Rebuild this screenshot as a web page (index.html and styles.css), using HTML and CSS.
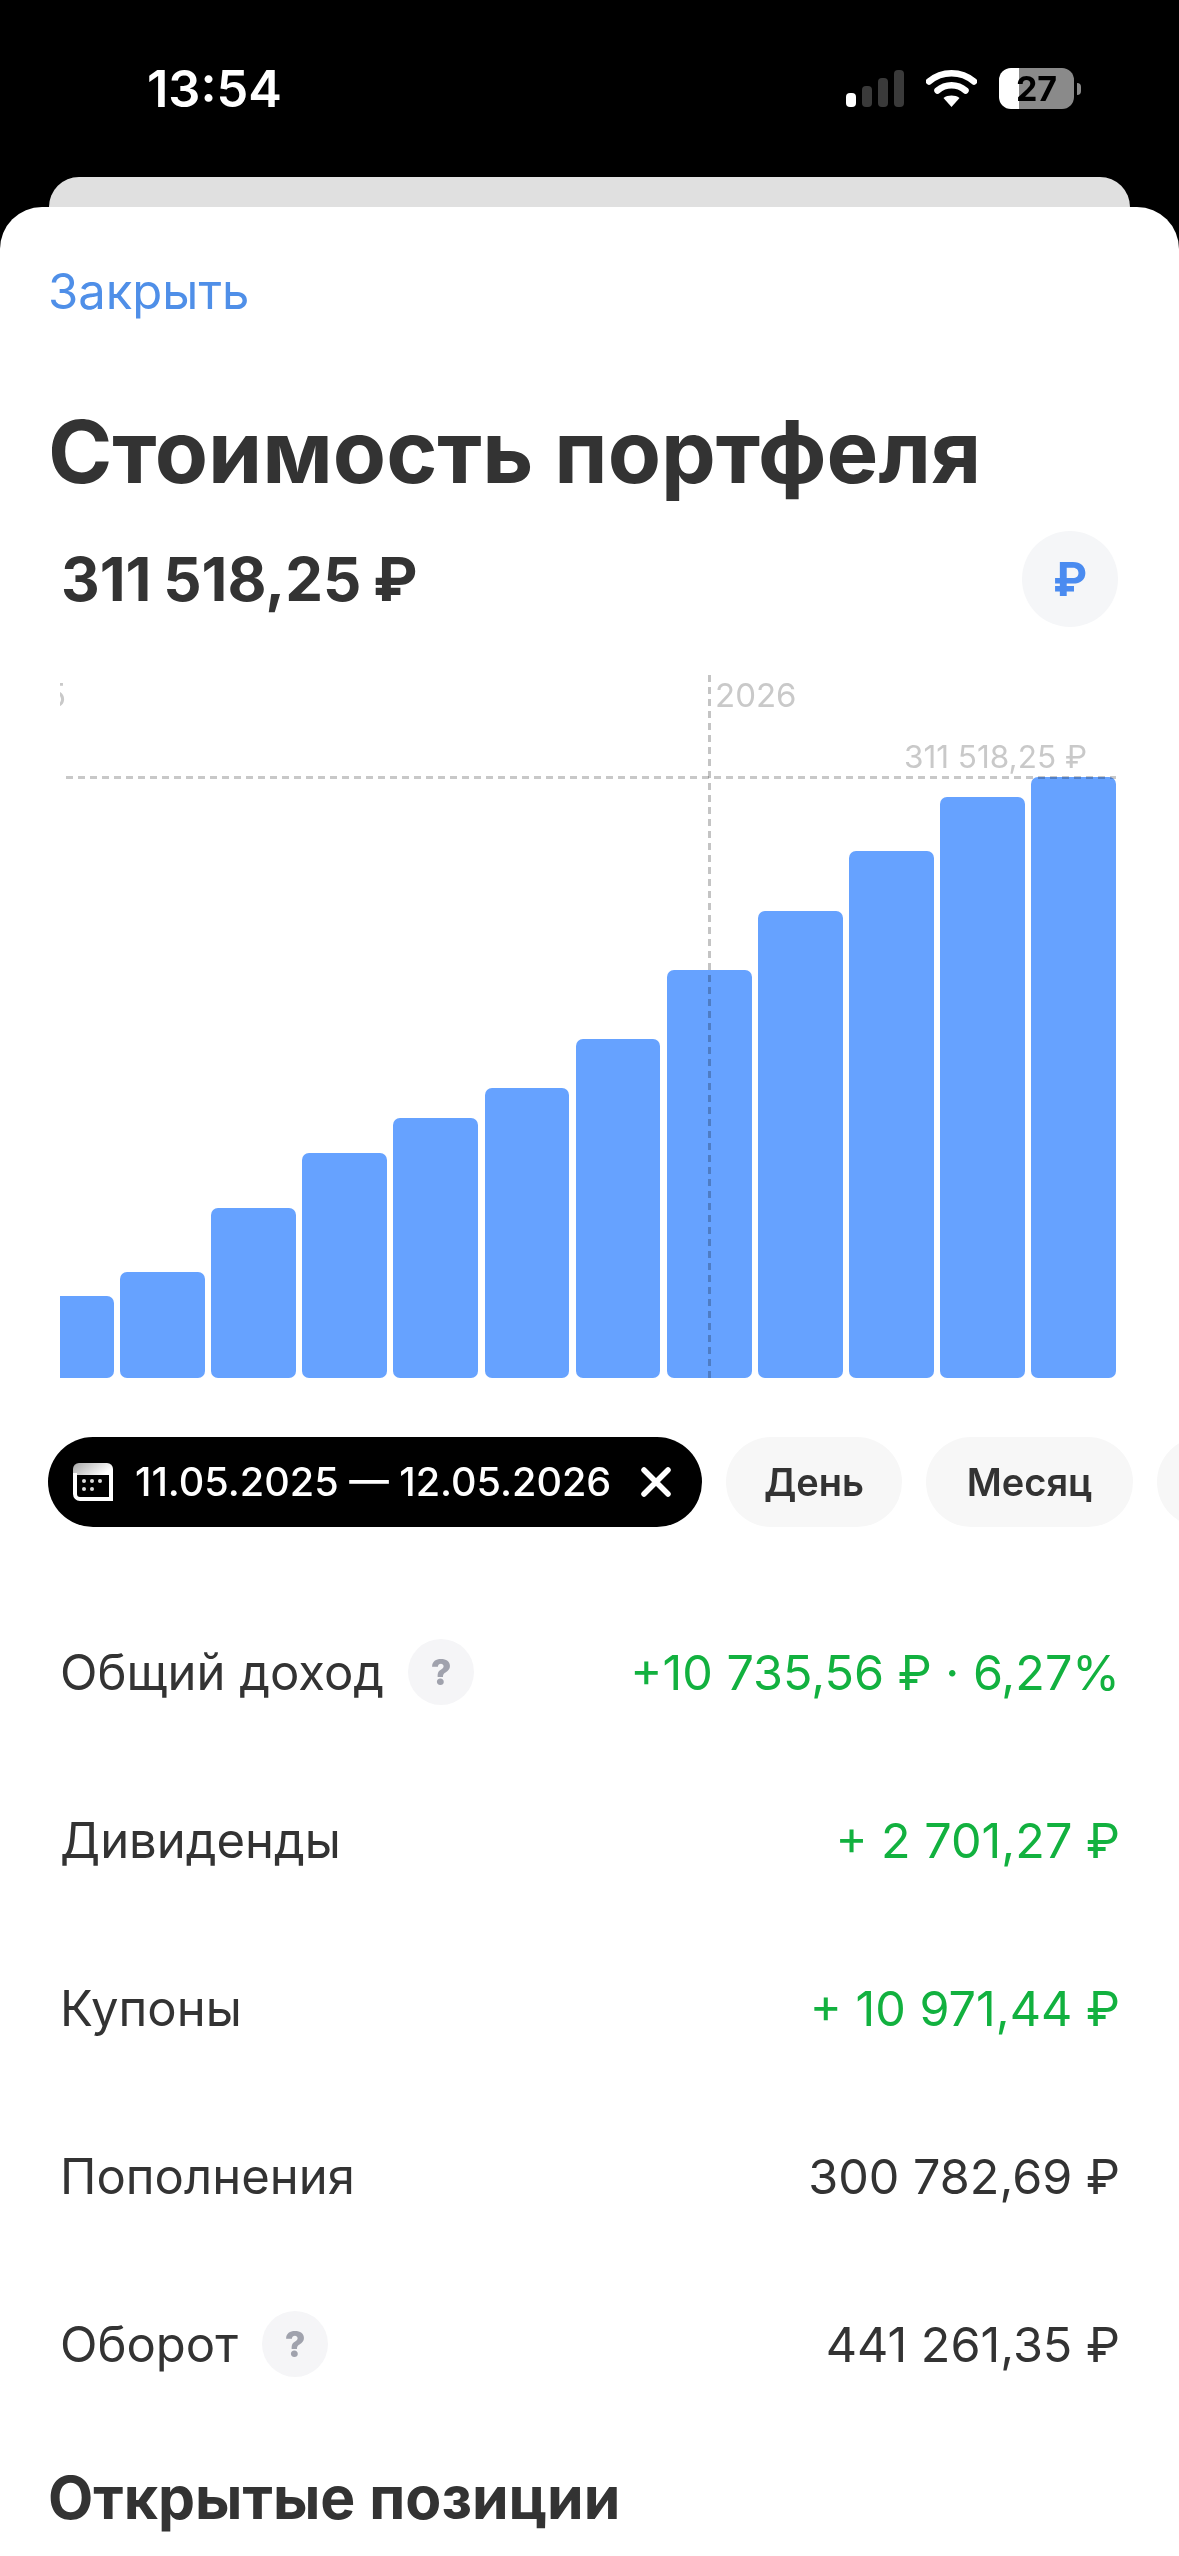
FILE: index.html
```html
<!DOCTYPE html>
<html lang="ru">
<head>
    <meta charset="UTF-8">
    <meta name="viewport" content="width=device-width, initial-scale=1.0">
    <title>Стоимость портфеля</title>
    <link rel="stylesheet" href="styles.css">
</head>
<body>

    <div class="status-bar">
        <span class="time">13:54</span>
        <div class="status-icons">
            <div class="signal">
                <span class="signal-bar signal-on s1"></span>
                <span class="signal-bar s2"></span>
                <span class="signal-bar s3"></span>
                <span class="signal-bar s4"></span>
            </div>
            <svg class="wifi" width="51" height="37" viewBox="0 0 51 37">
                <path d="M3 11.5C16 .5 35 .5 48 11.5" fill="none" stroke="#fff" stroke-width="6.5" stroke-linecap="round"/>
                <path d="M11.5 20.5C19.5 13.5 31.5 13.5 39.500 20.500" fill="none" stroke="#fff" stroke-width="6.5" stroke-linecap="round"/>
                <path d="M17.500 28C22 24.800 29 24.800 33.500 28L25.500 37Z" fill="#fff"/>
            </svg>
            <div class="battery">
                <div class="battery-body"><span class="battery-level">27</span></div>
                <span class="battery-nub"></span>
            </div>
        </div>
    </div>

    <div class="back-card"></div>

    <div class="sheet">
        <a class="close-link">Закрыть</a>
        <h1 class="title">Стоимость портфеля</h1>

        <div class="amount-row">
            <span class="amount">311 518,25 ₽</span>
            <span class="currency-btn">₽</span>
        </div>

        <div class="chart">
            <div class="bars">
                <div class="bar" style="height: 82px"></div>
                <div class="bar" style="height: 106px"></div>
                <div class="bar" style="height: 170px"></div>
                <div class="bar" style="height: 225px"></div>
                <div class="bar" style="height: 260px"></div>
                <div class="bar" style="height: 290px"></div>
                <div class="bar" style="height: 339px"></div>
                <div class="bar" style="height: 408px"></div>
                <div class="bar" style="height: 467px"></div>
                <div class="bar" style="height: 527px"></div>
                <div class="bar" style="height: 581px"></div>
                <div class="bar" style="height: 601px"></div>
            </div>
            <span class="year-label year-old">2025</span>
            <span class="year-label year-new">2026</span>
            <span class="max-label">311 518,25 ₽</span>
            <div class="line-h"></div>
            <div class="line-v"></div>
        </div>

        <div class="chips">
            <div class="chip chip-active">
                <svg class="calendar" width="40" height="38" viewBox="0 0 40 38">
                    <defs>
                        <linearGradient id="calTop" x1="0" y1="0" x2="1" y2="0.4">
                            <stop offset="0" stop-color="#a8a8a8"/>
                            <stop offset="1" stop-color="#fff"/>
                        </linearGradient>
                    </defs>
                    <path d="M6 0H34A6 6 0 0 1 40 6V12H0V6A6 6 0 0 1 6 0Z" fill="url(#calTop)"/>
                    <path d="M2 10V31A5 5 0 0 0 7 36H38V10" fill="none" stroke="#fff" stroke-width="4"/>
                    <circle cx="11" cy="18" r="2" fill="#ddd"/>
                    <circle cx="19" cy="18" r="2" fill="#ddd"/>
                    <circle cx="27" cy="18" r="2" fill="#ddd"/>
                    <circle cx="11" cy="26" r="2" fill="#ddd"/>
                    <circle cx="19" cy="26" r="2" fill="#ddd"/>
                </svg>
                <span class="chip-dates">11.05.2025 — 12.05.2026</span>
                <svg class="chip-close" width="30" height="30" viewBox="0 0 30 30">
                    <path d="M3 3L27 27M27 3L3 27" stroke="#fff" stroke-width="5.500" stroke-linecap="round"/>
                </svg>
            </div>
            <div class="chip chip-day">День</div>
            <div class="chip chip-month">Месяц</div>
            <div class="chip chip-year">Год</div>
        </div>

        <div class="rows">
            <div class="row">
                <div class="row-label">Общий доход <span class="hint">?</span></div>
                <div class="row-value green">+10 735,56 ₽ · 6,27%</div>
            </div>
            <div class="row">
                <div class="row-label">Дивиденды</div>
                <div class="row-value green">+ 2 701,27 ₽</div>
            </div>
            <div class="row">
                <div class="row-label">Купоны</div>
                <div class="row-value green">+ 10 971,44 ₽</div>
            </div>
            <div class="row">
                <div class="row-label">Пополнения</div>
                <div class="row-value">300 782,69 ₽</div>
            </div>
            <div class="row">
                <div class="row-label">Оборот <span class="hint">?</span></div>
                <div class="row-value">441 261,35 ₽</div>
            </div>
        </div>

        <h2 class="section-title">Открытые позиции</h2>
    </div>

</body>
</html>
```

FILE: styles.css
```css
html, body {
    margin: 0;
    height: 2556px;
    overflow: hidden;
}

body {
    background-color: #000;
    font-family: Inter, 'Liberation Sans', sans-serif;
    color: #333;
}

.status-bar {
    display: flex;
    justify-content: space-between;
    align-items: center;
    height: 177px;
    padding: 0 98px 0 147px;
    box-sizing: border-box;
}

.time {
    color: #fff;
    font-size: 50.5px;
    font-weight: 600;
}

.status-icons {
    display: flex;
    align-items: center;
    gap: 22px;
}

.signal {
    display: flex;
    align-items: flex-end;
    gap: 6px;
    height: 37px;
}

.signal-bar {
    width: 10px;
    border-radius: 4px;
    background-color: #3a3a3a;
}

.signal-on { background-color: #fff; }
.s1 { height: 14px; }
.s2 { height: 21px; }
.s3 { height: 29px; }
.s4 { height: 37px; }

.battery {
    display: flex;
    align-items: center;
    gap: 3px;
}

.battery-body {
    width: 75px;
    height: 41px;
    border-radius: 12px;
    background: linear-gradient(to right, #fff 27%, #8a8a8a 27%);
    display: flex;
    align-items: center;
    justify-content: center;
}

.battery-level {
    color: #000;
    font-size: 34px;
    font-weight: 700;
}

.battery-nub {
    width: 4px;
    height: 12px;
    border-radius: 0 6px 6px 0;
    background-color: #8a8a8a;
}

.back-card {
    height: 30px;
    margin: 0 49px;
    background-color: #e0e0e0;
    border-radius: 30px 30px 0 0;
}

.sheet {
    height: 2349px;
    background-color: #fff;
    border-radius: 42px 42px 0 0;
    padding-top: 57px;
    box-sizing: border-box;
    overflow: hidden;
}

.close-link {
    display: block;
    margin-left: 48px;
    height: 56px;
    line-height: 56px;
    font-size: 49px;
    color: #4f8fe8;
}

.title {
    margin: 80px 0 0 48px;
    height: 104px;
    line-height: 104px;
    font-size: 87px;
    font-weight: 700;
    color: #333;
}

.amount-row {
    display: flex;
    justify-content: space-between;
    align-items: center;
    margin-top: 27px;
    padding: 0 61px;
}

.amount {
    font-size: 60px;
    font-weight: 700;
    word-spacing: -2.5px;
}

.currency-btn {
    width: 96px;
    height: 96px;
    border-radius: 50%;
    background-color: #f5f6f8;
    color: #4a8bf0;
    font-size: 46px;
    font-weight: 700;
    display: flex;
    align-items: center;
    justify-content: center;
}

.chart {
    position: relative;
    height: 703px;
    margin: 48px 63px 0 60px;
    overflow: hidden;
}

.bars {
    display: flex;
    justify-content: flex-end;
    align-items: flex-end;
    gap: 6.45px;
    height: 100%;
}

.bar {
    flex: 0 0 84.7px;
    background-color: #66a2ff;
    border-radius: 7px;
}

.year-label {
    position: absolute;
    top: 0;
    font-size: 33px;
    color: #c9c9c9;
}

.year-old { right: 1050px; }
.year-new { left: 655px; }

.max-label {
    position: absolute;
    top: 62px;
    right: 29px;
    font-size: 31.5px;
    color: #c9c9c9;
}

.line-h {
    position: absolute;
    top: 101px;
    left: 6px;
    right: 0;
    height: 3px;
    background: repeating-linear-gradient(to right, #c8c8c8 0 7px, transparent 7px 12px);
    mix-blend-mode: multiply;
}

.line-v {
    position: absolute;
    top: 0;
    bottom: 0;
    left: 648px;
    width: 3px;
    background: repeating-linear-gradient(to bottom, #c4c4c4 0 7px, transparent 7px 12px);
    mix-blend-mode: multiply;
}

.chips {
    display: flex;
    gap: 24px;
    margin-top: 59px;
    padding-left: 48px;
    height: 90px;
}

.chip {
    flex: none;
    display: flex;
    align-items: center;
    justify-content: center;
    box-sizing: border-box;
    border-radius: 45px;
    background-color: #f7f7f7;
    font-size: 38px;
    font-weight: 600;
    color: #333;
}

.chip-active {
    width: 654px;
    background-color: #000;
    color: #fff;
    justify-content: flex-start;
    padding-left: 25px;
}

.chip-dates {
    margin-left: 22px;
    font-size: 39.6px;
    font-weight: 500;
    white-space: nowrap;
}

.chip-close {
    margin-left: 30px;
}

.chip-day { width: 176px; }
.chip-month { width: 207px; }
.chip-year { width: 176px; }

.rows {
    margin-top: 61px;
    padding: 0 59px 0 60px;
}

.row {
    display: flex;
    justify-content: space-between;
    align-items: center;
    height: 168px;
    font-size: 49px;
    white-space: nowrap;
}

.row-value {
    font-size: 48.5px;
}

.row-label {
    display: flex;
    align-items: center;
    gap: 24px;
}

.green {
    color: #12b13f;
}

.hint {
    width: 66px;
    height: 66px;
    border-radius: 50%;
    background-color: #f5f5f7;
    color: #a0a2ad;
    font-size: 36px;
    font-weight: 800;
    display: flex;
    align-items: center;
    justify-content: center;
}

.section-title {
    margin: 36px 0 0 48px;
    font-size: 58.8px;
    font-weight: 700;
    line-height: 68px;
    color: #333;
}
```
